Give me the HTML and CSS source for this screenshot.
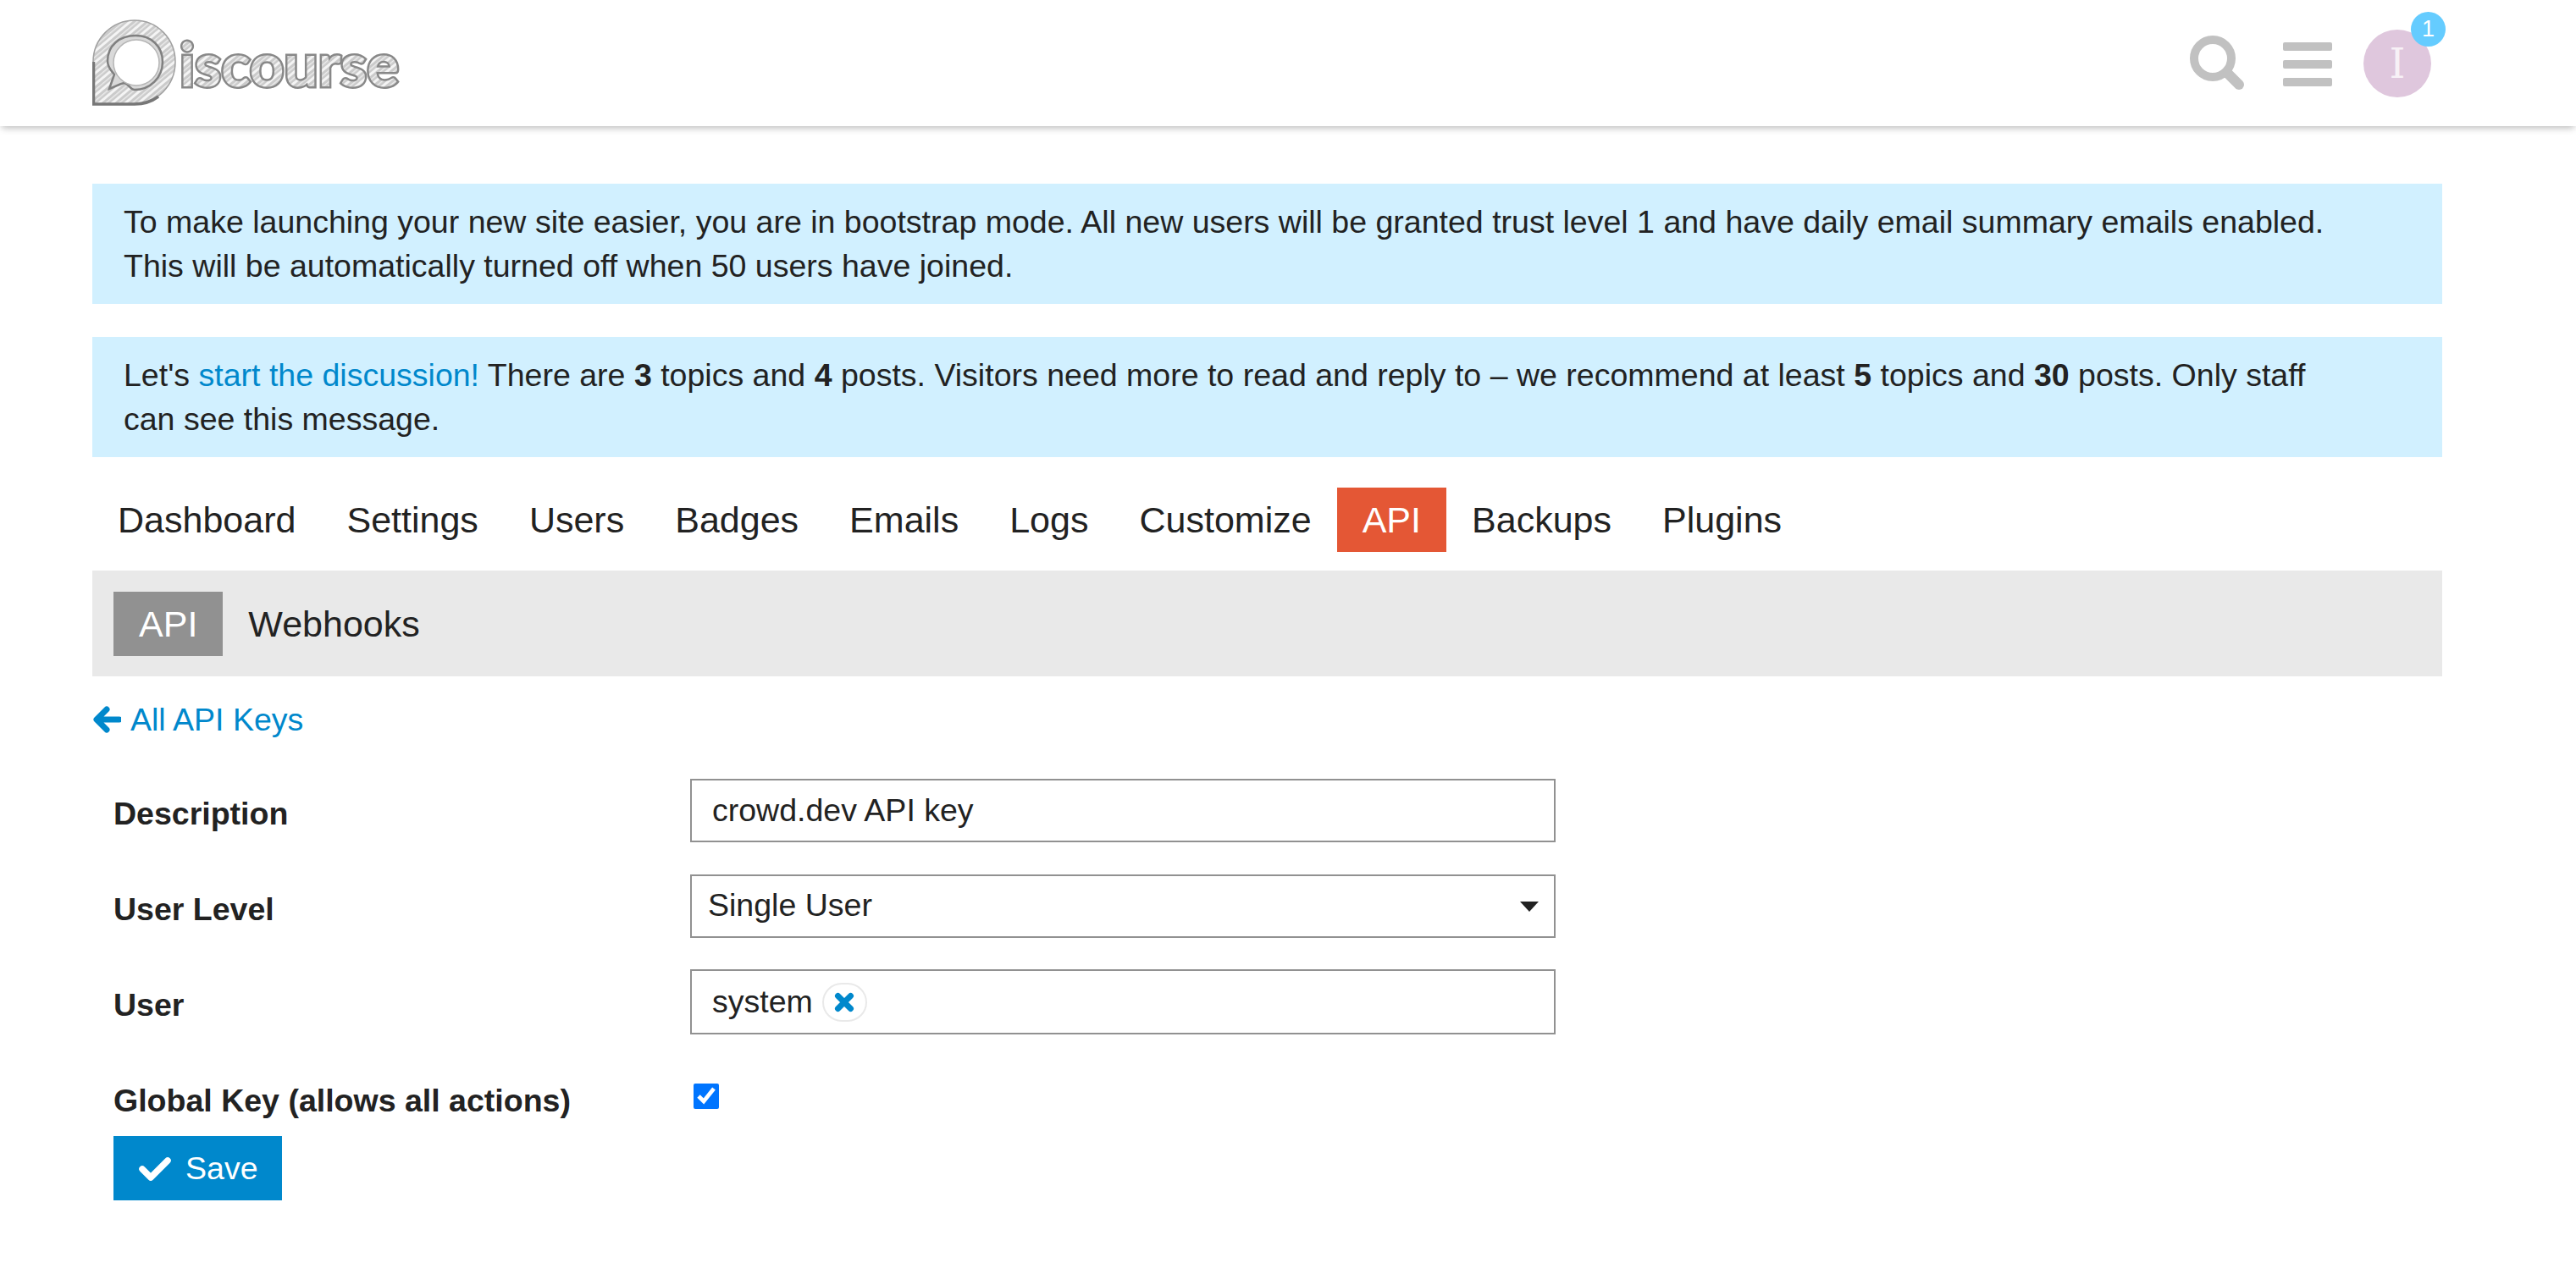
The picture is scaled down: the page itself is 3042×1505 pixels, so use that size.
FILE: index.html
```html
<!DOCTYPE html>
<html lang="en">
<head>
<meta charset="utf-8">
<title>Discourse API</title>
<link rel="stylesheet" href="styles.css">
</head>
<body>
<header class="site-header">
  <svg class="logo" width="378" height="110" viewBox="0 0 378 110" aria-label="Discourse">
    <defs>
      <pattern id="hatch" width="10" height="10" patternUnits="userSpaceOnUse" patternTransform="rotate(-40)">
        <rect width="10" height="10" fill="#cbcbcb"/>
        <rect y="0" width="10" height="3" fill="#f4f4f4"/>
        <rect y="6" width="10" height="1.4" fill="#ececec"/>
      </pattern>
    </defs>
    <path d="M1 101V51C1 24 23 2 50 2c27 0 48 22 48 49 0 28-22 50-49 50Z" fill="url(#hatch)" stroke="#a0a0a0" stroke-width="1.5"/>
    <path d="M1.5 51V101H50C60 101 70 98 78 92" stroke="#777" stroke-width="3.5" fill="none"/>
    <path d="M20 83 26 66C23 62 18 58 18 50 18 32 32 20 51 20 70 20 83 33 83 51 83 70 68 84 50 84 45 84 43 77 38 76 32 77 26 81 20 83Z" fill="#d9d9d9" stroke="#808080" stroke-width="2.5"/>
    <circle cx="52" cy="52" r="27" fill="#fff" stroke="#b5b5b5" stroke-width="1.5"/>
    <text class="logo-text" x="103" y="80">iscourse</text>
  </svg>
  <div class="header-icons">
    <svg class="search-icon" width="68" height="68" viewBox="0 0 68 68" aria-hidden="true">
      <circle cx="27" cy="27" r="22" fill="none" stroke="#c1c1c1" stroke-width="10"/>
      <path d="M45 45 58 58" stroke="#c1c1c1" stroke-width="12" stroke-linecap="round"/>
    </svg>
    <div class="hamburger" aria-hidden="true"><span></span><span></span><span></span></div>
    <div class="avatar">I<span class="badge">1</span></div>
  </div>
</header>

<main class="wrap">
  <div class="notice">To make launching your new site easier, you are in bootstrap mode. All new users will be granted trust level 1 and have daily email summary emails enabled.<br>This will be automatically turned off when 50 users have joined.</div>
  <div class="notice">Let's <a class="link" href="#">start the discussion!</a> There are <b>3</b> topics and <b>4</b> posts. Visitors need more to read and reply to – we recommend at least <b>5</b> topics and <b>30</b> posts. Only staff<br>can see this message.</div>

  <nav class="main-nav">
    <a href="#">Dashboard</a><a href="#">Settings</a><a href="#">Users</a><a href="#">Badges</a><a href="#">Emails</a><a href="#">Logs</a><a href="#">Customize</a><a href="#" class="active">API</a><a href="#">Backups</a><a href="#">Plugins</a>
  </nav>
  <nav class="sub-nav">
    <a href="#" class="active">API</a><a href="#">Webhooks</a>
  </nav>

  <a class="back link" href="#">
    <svg width="34" height="32" viewBox="0 0 34 32" aria-hidden="true"><path d="M17 4 5 16l12 12M6 16h26" fill="none" stroke="#0088cc" stroke-width="7" stroke-linecap="round" stroke-linejoin="round"/></svg>
    All API Keys
  </a>

  <form class="api-form">
    <label class="row-label">Description</label>
    <div class="field"><span class="value">crowd.dev API key</span></div>
    <label class="row-label">User Level</label>
    <div class="field select"><span>Single User</span><i class="caret"></i></div>
    <label class="row-label">User</label>
    <div class="field user"><span class="value">system</span>
      <span class="remove"><svg width="24" height="24" viewBox="0 0 24 24" aria-hidden="true"><path d="M4.5 4.500 19.500 19.500M19.500 4.500 4.500 19.500" stroke="#0088cc" stroke-width="7" stroke-linecap="round"/></svg></span>
    </div>
    <label class="row-label global">Global Key (allows all actions)</label>
    <div class="check-cell"><input type="checkbox" checked></div>
  </form>
  <button class="save" type="button">
    <svg width="40" height="30" viewBox="0 0 40 30" aria-hidden="true"><path d="M5 16 15 26 35 6" fill="none" stroke="#fff" stroke-width="7.5" stroke-linecap="round" stroke-linejoin="round"/></svg>
    Save
  </button>
</main>
</body>
</html>
```
FILE: styles.css
```css
* { box-sizing: border-box; }
html, body { margin: 0; background: #fff; }
body {
  font-family: "Liberation Sans", Arial, sans-serif;
  font-size: 37.53px;
  line-height: 52px;
  color: #222;
  height: 1505px;
  overflow: hidden;
}
a { color: inherit; text-decoration: none; }
.link { color: #0088cc; }

.site-header {
  height: 149px;
  padding: 22px 171px 0 109px;
  display: flex;
  justify-content: space-between;
  align-items: flex-start;
  box-shadow: 0 4px 8px -2px rgba(0, 0, 0, 0.28);
}
.logo { display: block; }
.logo-text {
  font-family: Lato, "Liberation Sans", sans-serif;
  font-weight: 700;
  font-size: 71px;
  fill: url(#hatch);
  stroke: #888;
  stroke-width: 5;
  paint-order: stroke;
}
.header-icons { display: flex; align-items: flex-start; }
.search-icon { margin: 20px 0 0 0; }
.hamburger {
  width: 58px;
  margin: 28px 0 0 42px;
  display: flex;
  flex-direction: column;
  gap: 11px;
}
.hamburger span { height: 10px; background: #c1c1c1; border-radius: 2px; }
.avatar {
  position: relative;
  width: 80px;
  height: 80px;
  margin: 13px 0 0 37px;
  border-radius: 50%;
  background: #dfc7dd;
  color: #f7f1f6;
  font-family: "DejaVu Serif", serif;
  font-size: 48px;
  line-height: 80px;
  text-align: center;
}
.badge {
  position: absolute;
  top: -21px;
  right: -17px;
  width: 41px;
  height: 41px;
  border-radius: 50%;
  background: #65ccff;
  color: #fff;
  font-family: "Liberation Sans", sans-serif;
  font-size: 27px;
  line-height: 41px;
}

.wrap { width: 2775px; margin-left: 109px; padding-top: 68px; }
.notice {
  height: 142px;
  margin-bottom: 39px;
  padding: 19px 37px;
  background: #d1f0ff;
}
.main-nav { display: flex; margin-top: -3px; height: 76px; }
.main-nav a, .sub-nav a {
  display: block;
  height: 76px;
  padding: 0 30px;
  font-size: 43.03px;
  line-height: 76px;
}
.main-nav a.active { background: #e45735; color: #fff; }
.sub-nav {
  display: flex;
  height: 125px;
  margin-top: 22px;
  padding: 25px;
  background: #e9e9e9;
}
.sub-nav a.active { background: #919191; color: #fff; }
.back {
  display: inline-flex;
  align-items: center;
  gap: 11px;
  margin-top: 25px;
  height: 52px;
}
.api-form {
  display: grid;
  grid-template-columns: 681px 1022px;
  grid-template-rows: 75px 75px 76px 60px;
  row-gap: 38px;
  margin: 41px 0 0 25px;
  align-items: start;
}
.row-label { font-weight: 700; line-height: 52px; margin-top: 15px; }
.row-label.global { margin-top: 14px; }
.field {
  height: 100%;
  display: flex;
  align-items: center;
  border: 2px solid #919191;
  padding: 0 24px;
  background: #fff;
}
.field.user { height: 77px; margin-top: -1px; }
.field.select { justify-content: space-between; padding: 0 18px 0 19px; }
.select span { margin-top: -4px; }
.caret {
  width: 0;
  height: 0;
  border-left: 11px solid transparent;
  border-right: 11px solid transparent;
  border-top: 12px solid #222;
}
.value { margin-top: -2px; }
.remove {
  display: flex;
  align-items: center;
  justify-content: center;
  width: 53px;
  height: 46px;
  margin-left: 11px;
  border: 2px solid #e9e9e9;
  border-radius: 23px;
}
.check-cell { padding: 20px 0 0 4px; }
.check-cell input { width: 30px; height: 30px; margin: 0; display: block; }
.save {
  display: flex;
  align-items: center;
  gap: 16px;
  width: 199px;
  height: 76px;
  margin: 22px 0 0 25px;
  padding: 0 0 0 29px;
  border: 0;
  background: #0088cc;
  color: #fff;
  font: inherit;
}
```
